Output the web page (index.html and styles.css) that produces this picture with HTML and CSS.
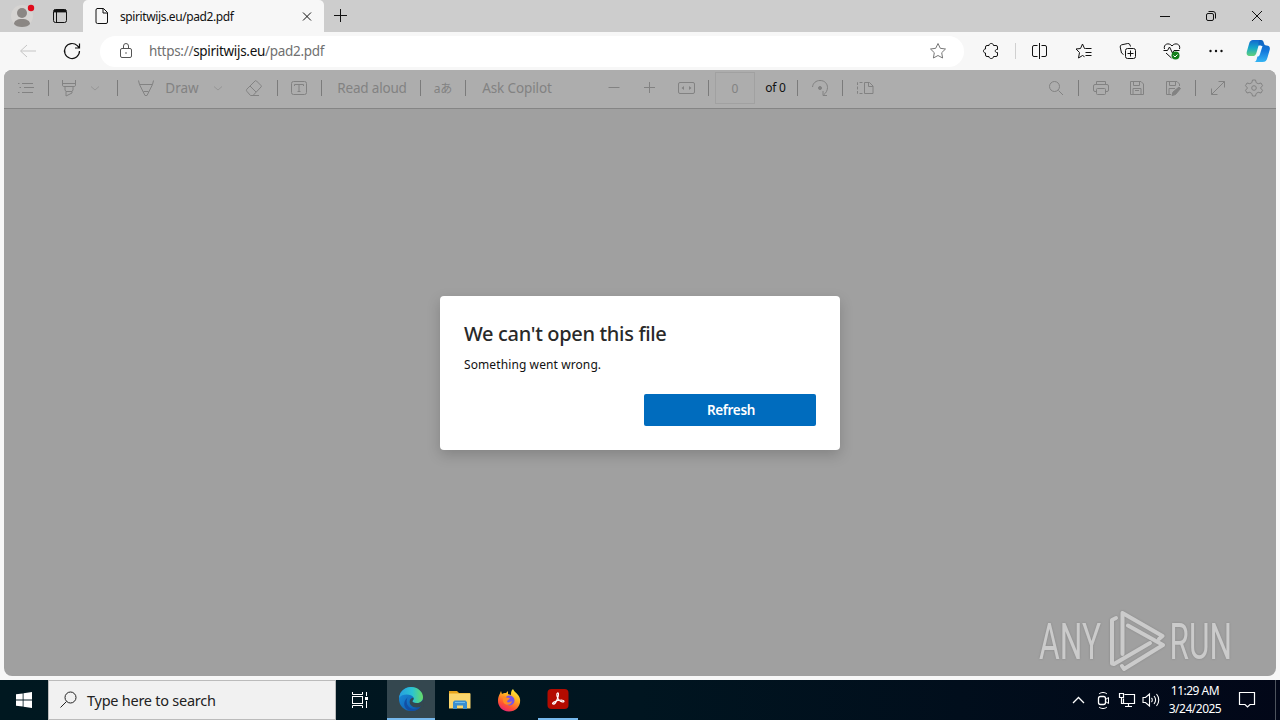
FILE: index.html
```
<!DOCTYPE html>
<html lang="en">
  <head>
    <meta charset="UTF-8" />
    <meta name="viewport" content="width=device-width, initial-scale=1.0" />
    <title>spiritwijs.eu/pad2.pdf</title>
    <link rel="stylesheet" href="styles.css">
  </head>
  <body>
    <div class="tab-bar">
      <div class="profile">
        <svg width="32" height="32" viewBox="0 0 32 32">
          <circle cx="16" cy="16" r="11" fill="#d6d4d2" />
          <circle cx="16" cy="13" r="5" fill="#8b8784" />
          <path d="M8 24c0-3 3-5 8-5s8 2 8 5c-1.500 2-4 3-8 3s-6.500-1-8-3z" fill="#8b8784" />
          <circle cx="25" cy="8" r="3.200" fill="#e00b1c" />
        </svg>
      </div>
      <div class="workspaces">
        <svg class="icon" viewBox="0 0 20 20"><rect x="3.500" y="3.500" width="13" height="13" rx="2" /><path d="M4 5h12" stroke-width="2.800" /><path d="M6.500 6v10" stroke-width="1" /></svg>
      </div>
      <div class="tab">
        <svg class="icon" viewBox="0 0 20 20"><path d="M5 2.500h6.500l4 4V16a1.500 1.500 0 0 1-1.500 1.500H5.500A1.500 1.500 0 0 1 4 16V4A1.500 1.500 0 0 1 5.500 2.500M11 2.500V7h4.500" /></svg>
        <span class="tab-title">spiritwijs.eu/pad2.pdf</span>
        <svg class="icon tab-close" viewBox="0 0 20 20"><path d="M6 6.500l8 8M14 6.500l-8 8" /></svg>
      </div>
      <div class="new-tab">
        <svg class="icon" viewBox="0 0 20 20"><path d="M10.500 3v13M4 9.500h13" /></svg>
      </div>
      <div class="window-buttons">
        <svg class="icon" viewBox="0 0 20 20"><path d="M5 10.500h10" /></svg>
        <svg class="icon" viewBox="0 0 20 20"><rect x="5.500" y="7.500" width="7" height="7" rx="1.500" /><path d="M7.500 5.500H12a2.500 2.500 0 0 1 2.500 2.500v4.500" /></svg>
        <svg class="icon" viewBox="0 0 20 20"><path d="M5 5l10 10M15 5L5 15" /></svg>
      </div>
    </div>

    <div class="nav-bar">
      <div class="nav-item back"><svg class="icon" viewBox="0 0 20 20"><path d="M18 10H3M9 4l-6.500 6L9 16" /></svg></div>
      <div class="nav-item reload"><svg class="icon" viewBox="0 0 20 20"><path d="M17.500 10a7.500 7.500 0 1 1-2.200-5.300L17.500 7M17.500 2.500V7H13" stroke-width="1.200" /></svg></div>
      <div class="address-bar">
        <svg class="icon lock" viewBox="0 0 20 20"><rect x="4.500" y="7.500" width="11" height="9" rx="1.500" /><path d="M7.500 7.500V5a2.500 2.500 0 0 1 5 0v2.500" /><circle cx="10" cy="12" r=".8" fill="currentColor" stroke="none" /></svg>
        <span class="url">https://<span class="host">spiritwijs.eu</span>/pad2.pdf</span>
        <svg class="icon star" viewBox="0 0 20 20"><path d="M10 2.500l2.300 4.800 5.200.7-3.800 3.700.9 5.300L10 14.500 5.400 17l.9-5.300L2.500 8l5.200-.7z" /></svg>
      </div>
      <div class="nav-item puzzle"><svg class="icon" viewBox="0 0 20 20"><path d="M6 4.500h2C8 1.800 12.500 1.800 12.500 4.500H15a1.500 1.500 0 0 1 1.500 1.500v2.500c-3-.5-3 3.500 0 3V14a1.500 1.500 0 0 1-1.500 1.500h-2.500c0 2.700-4.500 2.700-4.500 0H6A1.500 1.500 0 0 1 4.500 14v-2c-2.700 0-2.700-4 0-4V6A1.500 1.500 0 0 1 6 4.500z" /></svg></div>
      <div class="nav-divider"></div>
      <div class="nav-item"><svg class="icon" viewBox="0 0 20 20"><path d="M7.500 4.500H4A1.500 1.500 0 0 0 2.500 6v8A1.500 1.500 0 0 0 4 15.500h3.500M11.500 4.500H15A1.500 1.500 0 0 1 16.500 6v8a1.500 1.500 0 0 1-1.500 1.500h-3.500M9.500 2v16" /></svg></div>
      <div class="nav-item"><svg class="icon" viewBox="0 0 20 20"><path d="M11.500 7.500H10.500L8.500 3l-2 4.500L2 8l3.500 3.500L4.500 17l4-2.500 2 1.200M11.500 7.500h6M11.500 11.500h6M11.500 14.500h6" /></svg></div>
      <div class="nav-item"><svg class="icon" viewBox="0 0 20 20"><rect x="7.500" y="7.500" width="10" height="10" rx="2" /><path d="M5.500 13.500L3.500 12 2.200 6a2 2 0 0 1 1.500-2.200l6-1.300A2 2 0 0 1 12 4l.5 1.500M12.500 9.500v6M9.500 12.500h6" /></svg></div>
      <div class="nav-item"><svg class="icon" viewBox="0 0 20 20"><path d="M2.500 8C1 3 7 1 10 5c3-4 9-2 7.500 3M1.500 9.500h4l2-3.500 3 6 1.500-2.500h5.500M4 12l5.500 5" /><circle cx="13.500" cy="14.500" r="4" fill="#14801b" stroke="none" /><path d="M11.500 14.500l1.500 1.500 2.500-2.500" stroke="#fff" /></svg></div>
      <div class="nav-item"><svg class="icon" viewBox="0 0 20 20"><g fill="currentColor" stroke="none"><circle cx="4.500" cy="10" r="1.200" /><circle cx="10" cy="10" r="1.200" /><circle cx="15.500" cy="10" r="1.200" /></g></svg></div>
      <div class="nav-item copilot">
        <svg width="24" height="24" viewBox="0 0 24 24">
          <defs>
            <linearGradient id="cp1" x1="0" y1="0" x2="0" y2="1"><stop offset="0" stop-color="#1268cf" /><stop offset=".5" stop-color="#16a8c9" /><stop offset="1" stop-color="#63d179" /></linearGradient>
            <linearGradient id="cp2" x1="0" y1="0" x2="0" y2="1"><stop offset="0" stop-color="#0d62bd" /><stop offset=".5" stop-color="#1478dc" /><stop offset="1" stop-color="#35b5f3" /></linearGradient>
          </defs>
          <path d="M7 1h9c-2 0-2.500 2-3 4l-2 7c-1 4-2 5-4 5H4c-3 0-4-2-3-5l2-7c.8-3 2-4 4-4z" fill="url(#cp1)" />
          <path d="M13 1h2c2 0 2.500 1.500 3 3.500.3 1 1 2 2.500 2 3 0 4 2 3 5l-2 7c-.8 3-2 4.500-5 4.500H8c2 0 2.500-2 3-4l3-11c.4-1.500 1.500-1.500 3-1.500h-5z" fill="url(#cp2)" />
          <path d="M13.500 7h3l-2.500 8c-.5 2-1.500 2.500-2.500 2.500H8c2 0 2.500-1 3-2.500z" fill="#effaff" />
        </svg>
      </div>
    </div>

    <div class="viewer">
      <div class="pdf-toolbar">
        <div class="tools tools-left">
          <svg class="icon" viewBox="0 0 20 20"><path d="M6 5.500h11M8 9.500h10M6 14.500h11M2 5.500h1.500M3.500 9.500H5M2 14.500h1.500" /></svg>
          <i></i>
          <svg class="icon" viewBox="0 0 20 20"><path d="M3.500 2v5c0 1 .5 1.500 1.500 1.500h10c1 0 1.500-.5 1.500-1.500V2M3.500 5.500h13M6 8.500v3.500l1 1.500V18l6-3v-1.500l1-1.500V8.500M7 13.500h6" /></svg>
          <svg class="icon chevron" viewBox="0 0 20 20"><path d="M6 8.500l4 3.500 4-3.500" /></svg>
          <i></i>
          <svg class="icon" viewBox="0 0 20 20"><path d="M2.500 2.500l1 4L9 17.500h2l5.500-11 1-4M3.500 6.500h13M7.500 13.500h5" /></svg>
          <span class="draw">Draw</span>
          <svg class="icon chevron" viewBox="0 0 20 20"><path d="M6 8.500l4 3.500 4-3.500" /></svg>
          <svg class="icon" viewBox="0 0 20 20"><path d="M3 11l8-8c.5-.5 1-.5 1.500 0L17 7.500c.5.500.5 1 0 1.500l-8 8.500H6.500L3 13.500c-.8-1-.8-1.500 0-2.500zM6 8l6 6M8 17.500h7" /></svg>
          <i></i>
          <svg class="icon textbox" viewBox="0 0 20 20"><rect x="2.500" y="3.500" width="15" height="13" rx="2" /><path d="M5.500 8V6.500h9V8M10 6.500v7M8.500 13.500h3" /></svg>
          <i></i>
          <span class="read">Read aloud</span>
          <i></i>
          <span class="translate">aあ</span>
          <i></i>
          <span class="ask">Ask Copilot</span>
        </div>
        <div class="tools tools-page">
          <svg class="icon" viewBox="0 0 20 20"><path d="M4.500 9.500h11" /></svg>
          <svg class="icon" viewBox="0 0 20 20"><path d="M9.500 4v11M4 9.500h11" /></svg>
          <svg class="icon" viewBox="0 0 20 20"><rect x="2.500" y="4.500" width="16" height="11" rx="1.500" /><path d="M8 8l-2.500 2L8 12zM13 8l2.500 2-2.500 2z" fill="currentColor" stroke="none" /></svg>
          <i></i>
          <span class="page-number">0</span>
          <span class="page-total">of 0</span>
          <i></i>
          <svg class="icon" viewBox="0 0 20 20"><path d="M2.500 9C3 5 6 2.500 10 2.500c5 0 7.500 3.500 7.500 7 0 3-1.500 5.500-4 7.500M13 13v4.500h4" /><circle cx="10" cy="10" r="1.500" fill="currentColor" /></svg>
          <i></i>
          <svg class="icon" viewBox="0 0 20 20"><path d="M9.500 4.500h5l3.500 3.500v7.500H9.500zM13.500 4.500V8.500H18" /><path d="M7.500 4.500h-5v11h5" stroke-dasharray="3 1.500" /></svg>
        </div>
        <div class="tools tools-right">
          <svg class="icon" viewBox="0 0 20 20"><circle cx="8.500" cy="8.500" r="5" /><path d="M12.500 12.500l4.500 4.500" /></svg>
          <i></i>
          <svg class="icon" viewBox="0 0 20 20"><path d="M5.500 13.500H4A1.500 1.500 0 0 1 2.500 12V8A1.500 1.500 0 0 1 4 6.500h12A1.500 1.500 0 0 1 17.500 8v4a1.500 1.500 0 0 1-1.500 1.500h-1.500M5.500 6.500v-3h9v3" /><rect x="5.500" y="10.500" width="9" height="6" rx="1" /></svg>
          <svg class="icon" viewBox="0 0 20 20"><path d="M3.500 3.500h10.500l2.500 2.500v10.500h-13zM6.500 3.500v4h6v-4M6 16.500v-6h8v6M8 12.500h4" /></svg>
          <svg class="icon" viewBox="0 0 20 20"><path d="M8 16.500H3.500v-13H14l2.500 2.500v2M6.500 3.500v4h6v-4M6 16.500v-6h6" /><path d="M9 17.500l1-3.500 6-5 1.500 1.500-5 6z" fill="currentColor" /></svg>
          <i></i>
          <svg class="icon" viewBox="0 0 20 20"><path d="M3.500 16.500l13-13M10.500 3.500h6v6M3.500 10.500v6h6" /></svg>
          <svg class="icon" viewBox="0 0 20 20"><path d="M8.500 2h3l.7 2.700 2 1L17 5l1.500 2.700L16.500 10l2 2.300L17 15l-2.800-.7-2 1.200-.7 2.500h-3l-.7-2.500-2-1.200L3 15l-1.500-2.700 2-2.300-2-2.300L3 5l2.800.7 2-1z" /><circle cx="10" cy="10" r="2.300" /></svg>
        </div>
      </div>

      <div class="pdf-content">
        <div class="dialog">
          <h1>We can't open this file</h1>
          <p>Something went wrong.</p>
          <button>Refresh</button>
        </div>
      </div>

      <svg class="watermark" width="210" height="72" viewBox="0 0 210 72">
        <text x="4" y="54" textLength="62" lengthAdjust="spacingAndGlyphs">ANY</text>
        <text x="134.500" y="54" textLength="62.500" lengthAdjust="spacingAndGlyphs">RUN</text>
        <g fill="none" stroke-linejoin="round" stroke-linecap="round">
          <path d="M124 34l3.500-3L87.500 8v41" />
          <path d="M81 13l-4 2v43.500l2 .5 36-21" />
          <path d="M93 20.500l35 19.500-39 24-2-3" />
        </g>
      </svg>
    </div>

    <div class="taskbar">
      <div class="start">
        <svg width="16" height="16" viewBox="0 0 16 16"><path d="M0 2.300L6.700 1.400v6.200H0zM7.500 1.300L16 0v7.600H7.500zM0 8.400h6.700v6.200L0 13.700zM7.500 8.400H16V16l-8.500-1.200z" fill="#fff" /></svg>
      </div>
      <div class="search">
        <svg class="icon" viewBox="0 0 20 20"><circle cx="11.500" cy="7.500" r="5.500" /><path d="M7.500 11.500L1.500 17.500" /></svg>
        <span>Type here to search</span>
      </div>
      <div class="task-view">
        <svg class="icon" viewBox="0 0 20 20"><path d="M2.500 2v2.500h10V2M2.500 18v-2.500h10V18M16.500 2v4M16.500 11v7" /><rect x="2.500" y="6.500" width="10" height="7" /><path d="M15 8.500h3" stroke-width="3" /></svg>
      </div>
      <div class="app app-active">
        <svg width="26" height="26" viewBox="0 0 26 26">
          <defs>
            <linearGradient id="edgeTop"><stop offset="0" stop-color="#269ee0" /><stop offset=".55" stop-color="#2bc3d2" /><stop offset="1" stop-color="#67dc65" /></linearGradient>
            <linearGradient id="edgeLow" x1="0" y1="0" x2="1" y2="1"><stop offset="0" stop-color="#1b93df" /><stop offset="1" stop-color="#0b4fa5" /></linearGradient>
          </defs>
          <circle cx="13" cy="13" r="12" fill="url(#edgeLow)" />
          <path d="M1 12C2 5 7 1 13 1c7 0 12 5 12 10 0 4-3 6-6 6-3.500 0-5-1-4.500-2 1-1 1.500-2 1-3.500C14 8 4 7 1 12z" fill="url(#edgeTop)" />
          <path d="M15 14c-1 1-1 3 4 3 2 0 4-.5 6-3l1 6-3 .5c-6 3-13-1-11-6.500.5-1.500 3-3 3.500-2 .3.700 0 1.500-.5 2z" fill="#34474f" />
          <path d="M10 11c-3 4-1 11 5 12 3 .5 6-1 8-3-2 4-6 5-10 5-6-1-10-8-3-14z" fill="#124fa5" />
        </svg>
      </div>
      <div class="app">
        <svg width="24" height="24" viewBox="0 0 24 24">
          <path d="M1 3h8l2 2h11v5H1z" fill="#e8a51c" />
          <path d="M1 5.500h21.500v15H1z" fill="#fbd66c" />
          <path d="M5 21v-7l1.500-1.500h11L19 14v7h-4v-3.500H9V21z" fill="#3a8fd0" />
          <path d="M7 14.500h10" stroke="#6fbdec" stroke-width="1" />
        </svg>
      </div>
      <div class="app">
        <svg width="24" height="24" viewBox="0 0 24 24">
          <defs>
            <linearGradient id="fox" x1=".8" y1="0" x2=".3" y2="1"><stop offset="0" stop-color="#fff13d" /><stop offset=".4" stop-color="#ffac20" /><stop offset=".75" stop-color="#ff5133" /><stop offset="1" stop-color="#e92376" /></linearGradient>
          </defs>
          <path d="M4 3l1 3c1-1 2-1 4-1l2-2v3l3 1c0-3 0-4 2-6 1 3 6 5 7 10 1 7-4 12.500-11 12.500S1 18 1 13c0-5 2-7 3-10z" fill="url(#fox)" />
          <circle cx="12.500" cy="12.500" r="5" fill="#7654e8" />
          <path d="M6 8c3 1 4 2 7 2-1 2-3 2-3 4 2 1 3 0 5-1-1 5-8 5-9 0z" fill="#ff8b24" />
        </svg>
      </div>
      <div class="app app-open">
        <svg width="22" height="22" viewBox="0 0 22 22"><rect x=".5" y="1" width="21" height="20" rx="4" fill="#b30b00" /><path d="M10.500 5c1.500-.5 1 3 0 5.500-1 3-3 6-4.500 5.500s1.500-3 5-3.500 6-.5 6 .8-3 .7-5-1.300-3-6.500-1.500-7z" fill="none" stroke="#fff" stroke-width="1.200" /></svg>
      </div>
      <div class="tray">
        <svg class="icon" viewBox="0 0 20 20"><path d="M4 13l5.500-5.500L15 13" stroke-width="1.300" /></svg>
        <svg class="icon" viewBox="0 0 20 20"><rect x="5.500" y="6.500" width="7" height="8" rx="2" stroke-width="1.300" /><path d="M12.500 9.500l3-2v6l-3-2M6 4c2-2 6-2 8 0M6 17c2 2 6 2 8 0" /></svg>
        <svg class="icon" viewBox="0 0 20 20"><path d="M7.500 4.500h10v9h-11v-5M11.500 13.500v3M8 16.500h7M2.500 3.500h4v4h-4zM4.500 7.500v6h2" stroke-width="1.200" /></svg>
        <svg class="icon" viewBox="0 0 20 20"><path d="M2 7.500h2.500L8.500 4v12l-4-3.500H2zM10.500 8c1 1 1 3 0 4M13 6c2 2.500 2 5.500 0 8M15.500 4c3 3.500 3 8.500 0 12" stroke-width="1.100" /></svg>
      </div>
      <div class="clock">
        <span class="time">11:29 AM</span>
        <span class="date">3/24/2025</span>
      </div>
      <div class="notifications">
        <svg class="icon" viewBox="0 0 20 20"><path d="M2.500 2.500h15v12H13l-2.500 2.500L8 14.500H2.500z" stroke-width="1.200" /></svg>
      </div>
    </div>
  </body>
</html>
```
FILE: styles.css
```
* {
  margin: 0;
  padding: 0;
  box-sizing: border-box;
}

body {
  width: 1280px;
  height: 720px;
  overflow: hidden;
  display: flex;
  flex-direction: column;
  background-color: #f7f7f7;
  font-family: "Noto Sans", "Open Sans", sans-serif;
  font-size: 12px;
  color: #111;
  white-space: nowrap;
}

.icon {
  width: 20px;
  height: 20px;
  flex-shrink: 0;
  fill: none;
  stroke: currentColor;
  stroke-width: 1;
}

/* Tabs */
.tab-bar {
  height: 32px;
  display: flex;
  background-color: #cdcdcd;
}

.profile {
  width: 44px;
  padding-left: 6px;
}

.workspaces {
  width: 39px;
  padding: 6px 0 0 6px;
}

.tab {
  width: 241px;
  height: 32px;
  display: flex;
  align-items: center;
  padding: 0 7px 0 9px;
  background-color: #f7f7f7;
  border-radius: 5px 5px 0 0;
}

.tab-title {
  flex: 1;
  margin-left: 8px;
  font-size: 12px;
  letter-spacing: -0.4px;
}

.new-tab {
  padding: 6px;
}

.window-buttons {
  display: flex;
  margin-left: auto;
}

.window-buttons .icon {
  width: 20px;
  margin: 6px 13px;
}

/* Address row */
.nav-bar {
  height: 38px;
  display: flex;
  align-items: center;
}

.nav-item {
  width: 44px;
  display: flex;
  justify-content: center;
}

.back {
  width: 56px;
  color: #c5c5c5;
}

.reload {
  width: 32px;
}

.address-bar {
  width: 864px;
  height: 31px;
  margin-left: 12px;
  padding: 0 16px;
  display: flex;
  align-items: center;
  background-color: #fff;
  border-radius: 16px;
}

.lock {
  color: #555;
}

.url {
  flex: 1;
  margin-left: 13px;
  font-size: 13.5px;
  letter-spacing: -0.3px;
  color: #707070;
}

.host {
  color: #111;
}

.star {
  color: #777;
}

.puzzle {
  margin-left: 5px;
}

.nav-divider {
  width: 1px;
  height: 16px;
  margin: 0 2px;
  background-color: #d0d0d0;
}

.copilot {
  width: 40px;
}

/* PDF viewer */
.viewer {
  position: relative;
  width: 1272px;
  height: 606px;
  margin: 0 4px 4px;
  display: flex;
  flex-direction: column;
  overflow: hidden;
  border-radius: 8px;
  background-color: #a0a0a0;
}

.pdf-toolbar {
  height: 39px;
  padding: 0 8px 3px 0;
  display: flex;
  background-color: #adadad;
  border-bottom: 1px solid #858585;
  color: #828282;
  font-size: 13.5px;
}

.tools {
  display: grid;
  align-items: center;
  justify-items: center;
}

.tools i {
  width: 1px;
  height: 16px;
  background-color: #7b7b7b;
}

.tools-left {
  grid-template-columns: 44px 1px 40px 12px 33px 24px 48px 24px 47px 1px 43px 1px 98px 1px 44px 1px 102px;
}

.tools-page {
  margin-left: 28px;
  grid-template-columns: 36px 36px 36px 9px 44px 37px 7px 38px 7px 38px;
}

.tools-right {
  margin-left: auto;
  grid-template-columns: 44px 1px 44px 28px 44px 1px 44px 28px;
}

.chevron {
  color: #969696;
}

.textbox {
  margin-right: 1px;
}

.read {
  margin-left: 2px;
  letter-spacing: -0.2px;
}

.ask {
  letter-spacing: -0.1px;
}

.translate {
  font-family: "Noto Sans", "Noto Sans CJK JP", sans-serif;
  font-size: 12px;
}

.page-number {
  width: 40px;
  height: 32px;
  line-height: 32px;
  text-align: center;
  font-size: 12px;
  border: 1px solid #a1a1a1;
}

.page-total {
  color: #111;
  font-size: 12px;
  letter-spacing: -0.2px;
}

.pdf-content {
  flex: 1;
  display: flex;
  justify-content: center;
  align-items: flex-start;
  padding-top: 187px;
}

.dialog {
  width: 400px;
  height: 154px;
  padding: 24px;
  display: flex;
  flex-direction: column;
  background-color: #fff;
  border-radius: 4px;
  box-shadow: 0 5px 14px rgba(0, 0, 0, 0.18);
}

.dialog h1 {
  font-size: 20px;
  font-weight: 500;
  line-height: 28px;
  letter-spacing: -0.33px;
  color: #292929;
}

.dialog p {
  margin-top: 7px;
  line-height: 20px;
  letter-spacing: 0.1px;
}

.dialog button {
  width: 172px;
  height: 32px;
  margin-top: auto;
  padding: 0 0 1px 2px;
  align-self: flex-end;
  border: none;
  border-radius: 2px;
  background-color: #006cbe;
  color: #fff;
  font-family: inherit;
  font-size: 13.5px;
  font-weight: 600;
  letter-spacing: -0.3px;
}

/* Watermark sits over the page area */
.watermark {
  position: absolute;
  right: 31px;
  bottom: -1px;
  fill: #cbcbcb;
  stroke: #cbcbcb;
  filter: drop-shadow(0 0 1px #888);
}

.watermark text {
  font-family: "Roboto", sans-serif;
  font-size: 50px;
  font-weight: 400;
  stroke: none;
}

.watermark path {
  stroke-width: 4;
}

/* Taskbar */
.taskbar {
  height: 40px;
  display: flex;
  align-items: center;
  background: linear-gradient(to right, #001820, #001520 50%, #020718);
  color: #fff;
}

.start {
  width: 48px;
  display: flex;
  justify-content: center;
}

.search {
  width: 288px;
  height: 40px;
  display: flex;
  align-items: center;
  padding-left: 10px;
  background-color: #f1f1f1;
  border: 1px solid #bbb;
  color: #222;
  font-size: 14.5px;
}

.search span {
  margin-left: 8px;
  letter-spacing: -0.25px;
}

.task-view {
  width: 51px;
  padding-left: 14px;
  display: flex;
}

.app {
  width: 48px;
  height: 40px;
  margin-right: 1px;
  display: flex;
  align-items: center;
  justify-content: center;
}

.app-active {
  background-color: #34474f;
  border-bottom: 2px solid #76b9ed;
}

.app-open {
  width: 40px;
  margin-left: 4px;
  border-bottom: 2px solid #76b9ed;
}

.tray {
  display: flex;
  gap: 4px;
  margin-left: auto;
}

.clock {
  width: 68px;
  display: flex;
  flex-direction: column;
  align-items: center;
  line-height: 18px;
  letter-spacing: -0.5px;
}

.notifications {
  width: 47px;
  height: 40px;
  padding: 10px 0 0 8px;
  margin-right: 4px;
  border-right: 1px solid #4d535d;
}
```
